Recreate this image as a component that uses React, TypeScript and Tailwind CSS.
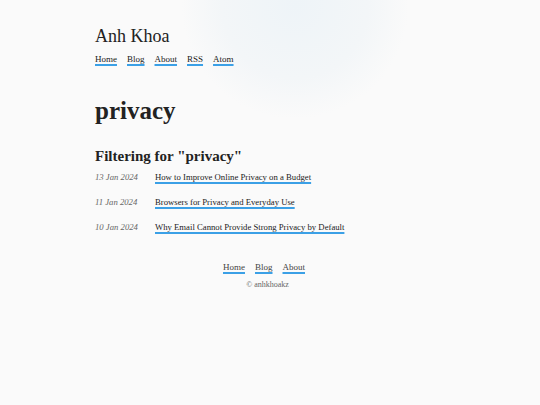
import React from "react";

const navLinks = ["Home", "Blog", "About", "RSS", "Atom"];
const footerLinks = ["Home", "Blog", "About"];

const posts = [
  { date: "13 Jan 2024", title: "How to Improve Online Privacy on a Budget" },
  { date: "11 Jan 2024", title: "Browsers for Privacy and Everyday Use" },
  { date: "10 Jan 2024", title: "Why Email Cannot Provide Strong Privacy by Default" },
];

const linkClass =
  "underline decoration-[#3ba0e6] decoration-[1.5px] underline-offset-[2px]";

function App() {
  return (
    <div className="relative min-h-screen overflow-hidden bg-[#fafafa] font-['Liberation_Serif',serif] text-[#222]">
      {/* faint glow behind header */}
      <div className="pointer-events-none absolute left-[180px] top-[-110px] h-[230px] w-[230px] rounded-full bg-[radial-gradient(circle,#eef4f8_0%,#f3f6f8_45%,rgba(250,250,250,0)_70%)]" />

      <div className="relative mx-auto w-[350px] pt-[24px]">
        <header>
          <div className="text-[18px] leading-[24px]">Anh Khoa</div>
          <nav className="mt-[5px] flex gap-[10px] text-[9px] leading-[12px]">
            {navLinks.map((l) => (
              <a key={l} href="#" className={linkClass}>
                {l}
              </a>
            ))}
          </nav>
        </header>

        <main className="mt-[31px]">
          <h1 className="text-[25px] font-bold leading-[30px]">privacy</h1>

          <h2 className="mt-[20px] text-[15px] font-bold leading-[20px]">
            Filtering for "privacy"
          </h2>

          <ul className="-mt-[1px] flex flex-col">
            {posts.map((p) => (
              <li key={p.title} className="flex h-[25px] items-center text-[8.7px]">
                <span className="w-[60px] italic text-[#666]">{p.date}</span>
                <a href="#" className={linkClass}>
                  {p.title}
                </a>
              </li>
            ))}
          </ul>
        </main>
      </div>

      <footer className="relative mt-[21px] flex flex-col items-center text-[9px]">
        <div className="flex gap-[10px] pr-[12px] text-[#444]">
          {footerLinks.map((l) => (
            <a key={l} href="#" className={linkClass}>
              {l}
            </a>
          ))}
        </div>
        <div className="mt-[4px] pr-[5px] text-[8px] text-[#666]">© anhkhoakz</div>
      </footer>
    </div>
  );
}

export default App;
